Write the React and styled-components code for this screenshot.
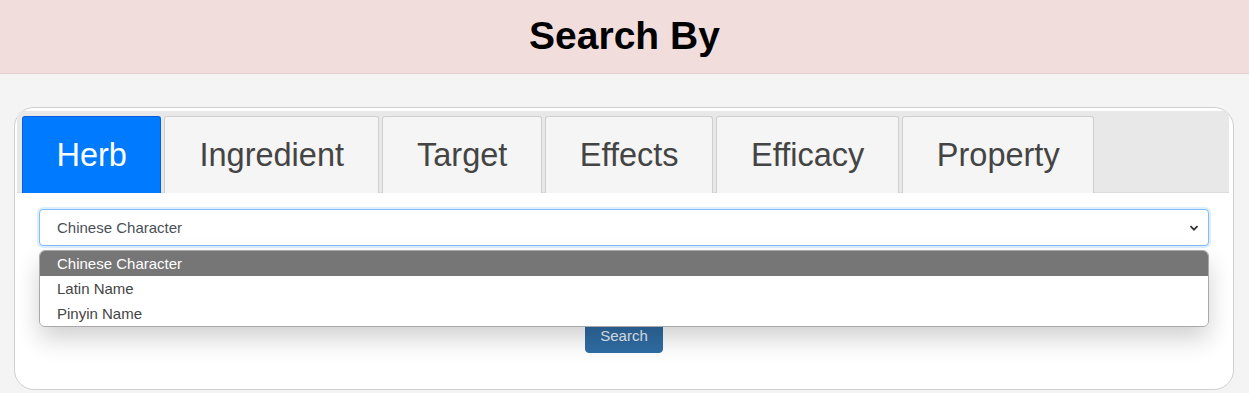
import React from "react";
import styled, { createGlobalStyle } from "styled-components";

const Global = createGlobalStyle`
  html, body { margin: 0; padding: 0; }
  body {
    background: #f4f4f4;
    font-family: "Liberation Sans", Arial, sans-serif;
  }
`;

const Header = styled.header`
  height: 73px;
  background: #f2dddd;
  border-bottom: 1px solid #e6cccc;
  display: flex;
  align-items: center;
  justify-content: center;
`;

const Title = styled.h1`
  margin: 0;
  font-size: 39px;
  font-weight: 700;
  color: #000;
  line-height: 1;
  padding-bottom: 2px;
`;

const Main = styled.main`
  padding: 33px 15px 0 14px;
`;

const Card = styled.section`
  position: relative;
  background: #fff;
  border: 1px solid #cfcfcf;
  border-radius: 20px;
  padding: 3px 4px 0 2px;
  height: 283px;
  box-sizing: border-box;
`;

const TabBar = styled.div`
  display: flex;
  gap: 3px;
  background: #e8e8e8;
  border-bottom: 1px solid #dcdcdc;
  border-radius: 6px 6px 0 0;
  padding: 5px 5px 0 5px;
`;

const Tab = styled.button`
  height: 77px;
  padding: 0 ${(p) => p.$pad}px;
  border: 1px solid ${(p) => (p.$active ? "#0b5ed7" : "#cfcfcf")};
  border-bottom: none;
  border-radius: 3px 3px 0 0;
  background: ${(p) => (p.$active ? "#007bff" : "#f5f5f5")};
  color: ${(p) => (p.$active ? "#fff" : "#444")};
  font-family: "Liberation Sans", Arial, sans-serif;
  font-size: 32.5px;
  cursor: pointer;
  margin-bottom: -1px;
`;

const Body = styled.div`
  position: relative;
  padding: 16px 20px 0 22px;
  display: flex;
  flex-direction: column;
  align-items: center;
`;

const SelectBox = styled.div`
  align-self: stretch;
  height: 37px;
  box-sizing: border-box;
  border: 1px solid #80bdff;
  border-radius: 4px;
  box-shadow: 0 0 0 2px rgba(128, 189, 255, 0.25);
  display: flex;
  align-items: center;
  justify-content: space-between;
  padding: 0 9px 0 17px;
  font-size: 15px;
  color: #495057;
  background: #fff;
`;

const Chevron = styled.svg`
  width: 10px;
  height: 10px;
`;

const Menu = styled.ul`
  position: absolute;
  top: 57px;
  left: 22px;
  right: 20px;
  margin: 0;
  padding: 0;
  list-style: none;
  background: #fff;
  border: 1px solid #a8a8a8;
  border-radius: 6px;
  overflow: hidden;
  box-shadow: 0 12px 24px rgba(0, 0, 0, 0.18);
  z-index: 2;
`;

const Option = styled.li`
  height: 25px;
  line-height: 25px;
  padding-left: 17px;
  font-size: 15px;
  color: ${(p) => (p.$selected ? "#fff" : "#444")};
  background: ${(p) => (p.$selected ? "#767676" : "#fff")};
`;

const SearchButton = styled.button`
  margin-top: 72px;
  width: 78px;
  height: 35px;
  border: 1px solid #2e6da4;
  border-radius: 4px;
  background: #2f6ca3;
  color: #e8eef5;
  font-family: "Liberation Sans", Arial, sans-serif;
  font-size: 15px;
  padding: 0;
`;

const tabs = [
  { label: "Herb", pad: 33.5 },
  { label: "Ingredient", pad: 34 },
  { label: "Target", pad: 34 },
  { label: "Effects", pad: 33.5 },
  { label: "Efficacy", pad: 34 },
  { label: "Property", pad: 33.5 },
];

export default function App() {
  return (
    <>
      <Global />
      <Header>
        <Title>Search By</Title>
      </Header>
      <Main>
        <Card>
          <TabBar>
            {tabs.map((t, i) => (
              <Tab key={t.label} $active={i === 0} $pad={t.pad}>
                {t.label}
              </Tab>
            ))}
          </TabBar>
          <Body>
            <SelectBox>
              <span>Chinese Character</span>
              <Chevron viewBox="0 0 10 10">
                <path d="M1.5 3.2 L5 6.7 L8.5 3.2" fill="none" stroke="#333" strokeWidth="1.8" />
              </Chevron>
            </SelectBox>
            <Menu>
              <Option $selected>Chinese Character</Option>
              <Option>Latin Name</Option>
              <Option>Pinyin Name</Option>
            </Menu>
            <SearchButton>Search</SearchButton>
          </Body>
        </Card>
      </Main>
    </>
  );
}
